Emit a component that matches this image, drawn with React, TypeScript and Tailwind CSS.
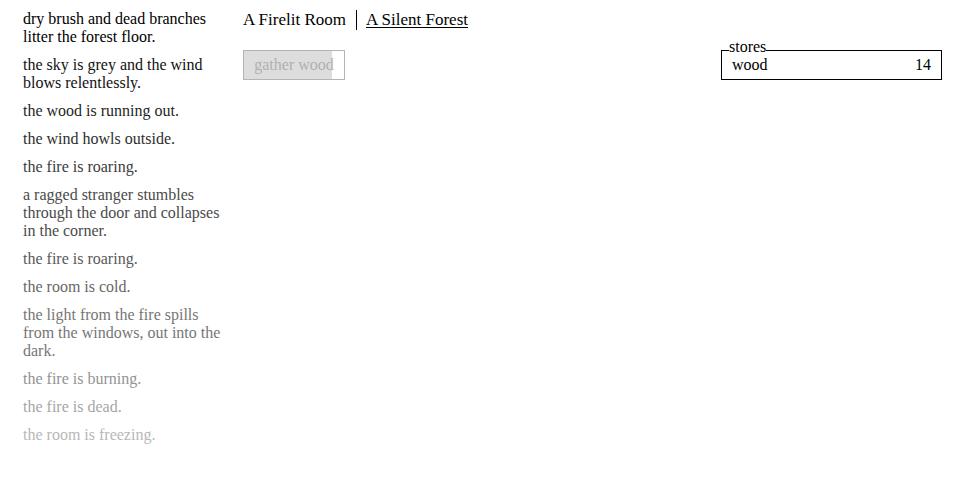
import React from 'react';

const notifications: { text: string; color: string }[] = [
  { text: 'dry brush and dead branches litter the forest floor.', color: 'text-[#000000]' },
  { text: 'the sky is grey and the wind blows relentlessly.', color: 'text-[#111111]' },
  { text: 'the wood is running out.', color: 'text-[#1f1f1f]' },
  { text: 'the wind howls outside.', color: 'text-[#2e2e2e]' },
  { text: 'the fire is roaring.', color: 'text-[#3c3c3c]' },
  { text: 'a ragged stranger stumbles through the door and collapses in the corner.', color: 'text-[#4a4a4a]' },
  { text: 'the fire is roaring.', color: 'text-[#595959]' },
  { text: 'the room is cold.', color: 'text-[#676767]' },
  { text: 'the light from the fire spills from the windows, out into the dark.', color: 'text-[#767676]' },
  { text: 'the fire is burning.', color: 'text-[#939393]' },
  { text: 'the fire is dead.', color: 'text-[#a6a6a6]' },
  { text: 'the room is freezing.', color: 'text-[#b8b8b8]' },
];

export default function App() {
  return (
    <div
      className="flex h-[480px] w-full bg-white pt-[10px] text-[16px] leading-[18px] text-black"
      style={{ fontFamily: '"Liberation Serif", "Times New Roman", serif' }}
    >
      {/* Notifications */}
      <div className="ml-[23px] flex w-[200px] shrink-0 flex-col gap-[10px]">
        {notifications.map((n, i) => (
          <div key={i} className={n.color}>
            {n.text}
          </div>
        ))}
      </div>

      {/* Main */}
      <div className="ml-[20px] flex flex-1 flex-col">
        <div className="mt-[1px] flex h-[18px] items-center text-[17px]">
          <span>A Firelit Room</span>
          <span className="ml-[10px] h-[20px] border-l border-black" />
          <span className="ml-[9px] underline underline-offset-2">A Silent Forest</span>
        </div>
        <div className="mt-[21px]">
          <div className="relative flex h-[30px] w-[102px] items-center justify-center border border-[#b4b4b4] bg-white">
            <div className="absolute left-0 top-0 h-full w-[88%] bg-[#dddddd]" />
            <span className="relative text-[#b0b0b0]">gather wood</span>
          </div>
        </div>
      </div>

      {/* Stores */}
      <div className="mr-[21px] w-[221px] shrink-0">
        <div className="relative mt-[40px] flex h-[30px] items-center justify-between border border-black px-[10px]">
          <span className="absolute -top-[13px] left-[7px] bg-white leading-[18px]">stores</span>
          <span>wood</span>
          <span>14</span>
        </div>
      </div>
    </div>
  );
}
